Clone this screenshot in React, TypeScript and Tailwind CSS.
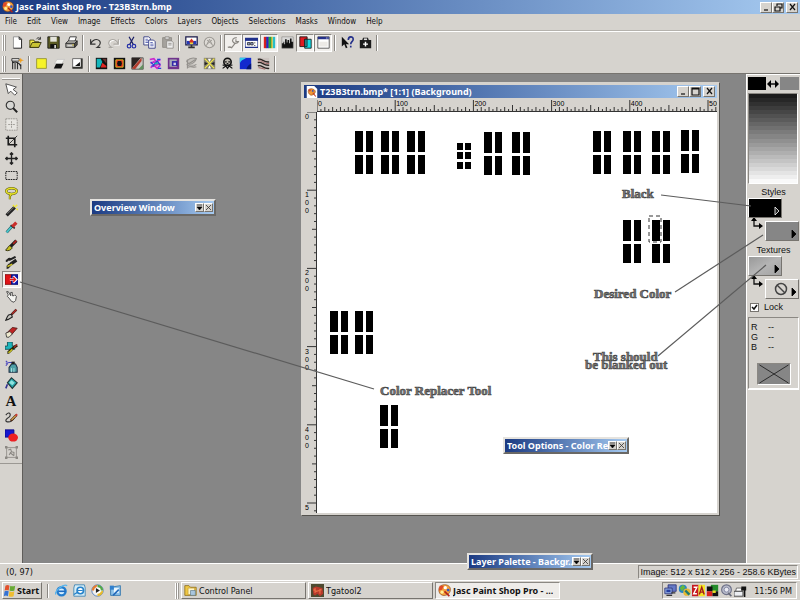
import React from "react";

const raised = "border border-t-white border-l-white border-r-[#77746f] border-b-[#77746f]";
const sunken = "border border-t-[#8b8883] border-l-[#8b8883] border-r-white border-b-white";
const boldFont = "font-['Noto_Sans',sans-serif] font-bold";

const icons: Record<string, React.ReactNode> = {
  app: (
    <>
      <path d="M1 7C1 3 5 0 10 1c5 1 6 5 5 8s-5 6-9 5-5-4-5-7z" fill="#f5a13c" stroke="#7a3a12" strokeWidth=".7" />
      <path d="M2 2l5 0-2 5-4 1z" fill="#e04a28" />
      <circle cx="9" cy="4.500" r="2" fill="#fff" />
      <circle cx="12.500" cy="7.500" r="1.700" fill="#3156c8" />
      <circle cx="5" cy="10" r="1.900" fill="#fff29a" />
      <path d="M8 9l6 6" stroke="#b22518" strokeWidth="2" />
    </>
  ),
  document: (
    <>
      <path d="M1 0h10l4 4v12H1z" fill="#fff" />
      <path d="M3 7c0-3 3-4 6-3s4 3 3 5-4 4-6 3-3-3-3-5z" fill="#f09a35" stroke="#8b3d15" strokeWidth=".8" />
      <path d="M3 4l4 1-2 3z" fill="#d3412a" />
      <path d="M9 9l4 5" stroke="#c93620" strokeWidth="1.4" />
      <circle cx="9" cy="6.500" r="1.300" fill="#3e4fae" />
    </>
  ),
  new: (
    <>
      <path d="M3 1h7l3 3v11H3z" fill="#fff" />
      <path d="M3 15V1h7" fill="none" stroke="#888" />
      <path d="M3 15h10V4M10 1v3h3z" fill="none" stroke="#222" strokeWidth="1.2" />
    </>
  ),
  open: (
    <>
      <path d="M1 5h5l1 2h5v7H1z" fill="#f6ec4a" stroke="#3c3a08" />
      <path d="M1 14l3-6h11l-3 6z" fill="#c9c334" stroke="#22210a" />
      <path d="M9 4c2-3 4-2 5 0m0-3v3h-3" fill="none" stroke="#222" />
    </>
  ),
  save: (
    <>
      <path d="M1 1h14v14H1z" fill="#5b5b24" stroke="#111" />
      <path d="M4 1h8v6H4z" fill="#e4e4dc" />
      <path d="M4 10h8v5H4z" fill="#111" />
      <path d="M9 11h2v4H9z" fill="#ddd" />
    </>
  ),
  print: (
    <>
      <path d="M6 1h8l-2 6H4z" fill="#fff" stroke="#222" />
      <path d="M1 9l3-3h11l-3 3z" fill="#c9c7c2" stroke="#222" />
      <path d="M1 9h11v5H1z" fill="#a5a39e" stroke="#222" />
      <path d="M12 9l3-3v5l-3 3z" fill="#55534f" stroke="#222" />
      <path d="M3 12h6" stroke="#f1f1f1" />
      <path d="M9 11h2" stroke="#cbb500" />
    </>
  ),
  undo: <path d="M2 4v6h6M2 10c2-6 8-7 11-4 2 3 0 6-3 8h4" fill="none" stroke="#333" strokeWidth="1.4" />,
  redo: (
    <>
      <path d="M15 5v6H9M15 11C13 5 7 4 4 7c-2 3 0 6 3 8" fill="none" stroke="#fff" strokeWidth="1.4" />
      <path d="M14 4v6H8M14 10C12 4 6 3 3 6c-2 3 0 6 3 8H2" fill="none" stroke="#aaa7a2" strokeWidth="1.4" />
    </>
  ),
  cut: (
    <>
      <path d="M5 1l5 9M11 1L6 10" stroke="#1b1f66" strokeWidth="1.5" />
      <circle cx="5" cy="12.500" r="2.200" fill="none" stroke="#2530a8" strokeWidth="1.5" />
      <circle cx="11" cy="12.500" r="2.200" fill="none" stroke="#2530a8" strokeWidth="1.5" />
    </>
  ),
  copy: (
    <>
      <path d="M1 1h6l2 2v8H1z" fill="#fff" stroke="#222a78" />
      <path d="M7 5h6l2 2v8H7z" fill="#fff" stroke="#222a78" />
      <path d="M3 4h3M3 6h4M3 8h4M9 8h3M9 10h4M9 12h4" stroke="#4450a8" />
    </>
  ),
  paste: (
    <>
      <path d="M2 2h11v12H2z" fill="#a5a29d" stroke="#8b8883" />
      <path d="M5 1h5v3H5z" fill="#ddd" stroke="#8b8883" />
      <path d="M7 6h6l2 2v7H7z" fill="#eee" stroke="#8b8883" />
      <path d="M9 9h4M9 11h4" stroke="#8b8883" />
    </>
  ),
  monitor: (
    <>
      <path d="M1 1h14v10H1z" fill="#fff" stroke="#181848" strokeWidth="1.5" />
      <path d="M2 6h12v4H2z" fill="#2438b4" />
      <path d="M8 3l3 4-2 2H7L5 7z" fill="#d83022" />
      <path d="M6 8h4v2H6z" fill="#e9d73a" />
      <path d="M7 11h2v2h3v2H4v-2h3z" fill="#333" />
    </>
  ),
  cancelCircle: (
    <>
      <circle cx="8" cy="8" r="6.500" fill="#dedbd6" stroke="#9b9893" strokeWidth="1.3" />
      <path d="M4 12l4-8 4 8M5 5l6 5M11 5l-6 5" fill="none" stroke="#9b9893" strokeWidth="1.2" />
    </>
  ),
  wrench: <path d="M3 14h3l4-5M8 8c-3-3 0-6 4-6M8 8c2 2 5 1 6-1h-3V4M1 14c2-1 4-1 5 1" fill="none" stroke="#8b8883" strokeWidth="1.4" />,
  options: (
    <>
      <path d="M0 3h16v11H0z" fill="#fff" stroke="#20318c" strokeWidth="1.5" />
      <path d="M0 3h16v3H0z" fill="#20318c" />
      <path d="M3 8h3v3H3zM7 8h3v3H7z" fill="#8d9ac8" stroke="#222" strokeWidth=".9" />
      <path d="M12 8v1M12 11v1" stroke="#222" strokeWidth="1.5" />
    </>
  ),
  palette: (
    <>
      <path d="M1 1h3v14H1z" fill="#df2020" />
      <path d="M4 1h3v14H4z" fill="#2525cc" />
      <path d="M7 1h3v14H7z" fill="#20b84a" />
      <path d="M10 1h2v14h-2z" fill="#ead725" />
      <path d="M12 1h3v14h-3z" fill="#27bccb" />
      <path d="M4 1v14M7 1v14M10 1v14" stroke="#222" strokeWidth=".5" />
    </>
  ),
  histogram: (
    <>
      <path d="M1 1h14v14H1z" fill="#d9d9d7" />
      <path d="M1 15V9h2V7h1v3h1V4h2v4h1V5h2v4h1V3h2v4h2v8z" fill="#111" />
      <path d="M1 1v14h14V1z" stroke="#77746f" fill="none" strokeWidth=".6" />
    </>
  ),
  layers: (
    <>
      <path d="M1 1h9v12H1z" fill="#e01c22" stroke="#111" />
      <path d="M7 4h8v11H7z" fill="#15dbe4" stroke="#111" />
      <path d="M7 4h3v9H7z" fill="#2b8d95" stroke="#111" strokeWidth=".8" />
    </>
  ),
  windowPanel: (
    <>
      <path d="M1 1h14v14H1z" fill="#fff" stroke="#444" />
      <path d="M1 1h14v3H1z" fill="#24308a" />
      <path d="M11 2.500h1M13 2.500h1" stroke="#fff" />
      <path d="M3 7h10v6H3z" fill="#eceae6" />
    </>
  ),
  help: (
    <>
      <path d="M1 1v12l3-3 2 5 2-1-2-4h4z" fill="#111" />
      <path d="M9 5c0-5 6-5 6-1 0 3-3 3-3 6M12 12v2" fill="none" stroke="#24308a" strokeWidth="2" />
    </>
  ),
  camera: (
    <>
      <path d="M1 5h3l1-3h6l1 3h3v10H1z" fill="#1b1b1b" />
      <path d="M6 3h4v2H6z" fill="#ddd" />
      <path d="M8 7v6M5 10h6" stroke="#fff" strokeWidth="1.8" />
    </>
  ),
  effectBrowser: (
    <>
      <path d="M1 2h9v3H1z" fill="#eee" stroke="#222" />
      <path d="M2 5v10M5 7v8M8 7v8M12 9v6" stroke="#333" strokeWidth="1.4" />
      <path d="M2 7c4-2 8 0 10 4" fill="none" stroke="#222" strokeWidth="1.4" />
      <path d="M12 1l1 2 3 1-3 1-1 3-1-3-2-1 2-1z" fill="#f0a020" />
    </>
  ),
  yellow: <path d="M2 2h12v12H2z" fill="#f6f32a" stroke="#8e8c2e" />,
  shadow: (
    <>
      <path d="M4 8h9l-3 6H1z" fill="#111" />
      <path d="M5 3h9l-3 5H2z" fill="#f4f4f1" stroke="#aaa" strokeWidth=".5" />
    </>
  ),
  cornerBox: (
    <>
      <path d="M2 2h12v12H2z" fill="#fff" stroke="#555" />
      <path d="M5 11l6-5v5z" fill="#111" />
      <path d="M12 2h2v12H2v-2h10z" fill="#33332f" />
    </>
  ),
  chrome: (
    <>
      <path d="M1 1h14v14H1z" fill="#111" />
      <path d="M2 2h5l2 4-3 7H2z" fill="#14b6bb" />
      <path d="M7 13l2-6 5 4v2z" fill="#e12623" />
      <path d="M9 2h5v6z" fill="#66322f" />
    </>
  ),
  frame: (
    <>
      <path d="M1 1h14v14H1z" fill="#111" />
      <path d="M3.500 3.500h9v9h-9z" fill="#e4281c" stroke="#e9d62a" />
      <path d="M6 5h4l1 3-1 3H6L5 8z" fill="#111" />
    </>
  ),
  slope: (
    <>
      <path d="M1 1h14v14H1z" fill="#c8c6c1" stroke="#444" />
      <path d="M1 1h11L1 14z" fill="#2b2322" />
      <path d="M1 14L13 1v4L5 15z" fill="#b23b2d" />
      <path d="M9 15l6-6v6z" fill="#61905d" />
    </>
  ),
  kaleido: (
    <>
      <path d="M1 1h14v14H1z" fill="#d8c4e4" />
      <path d="M1 3l5-1 3 4 5-3M2 8l4-2 3 4 5-2M2 13l4-3 4 4 4-4" fill="none" stroke="#cb27c8" strokeWidth="2" />
      <path d="M2 6l4 4 4-5 4 5M3 11h3M10 3h4M11 14h4" stroke="#2846d5" strokeWidth="1.6" fill="none" />
      <path d="M7 8h4" stroke="#1ac4ab" strokeWidth="2" />
    </>
  ),
  pattern: (
    <>
      <path d="M1 1h14v14H1z" fill="#70348c" />
      <path d="M3 3h9v9H3z" fill="#a7a9b7" />
      <path d="M6 5h7v6H6z" fill="#3328a8" />
      <path d="M8 7h3v3H8z" fill="#d5d1e6" />
    </>
  ),
  leaf: (
    <>
      <path d="M2 5c4-4 9-4 12-3-1 4-5 7-9 7zM2 9c3 3 8 3 12 0" fill="#c4c1bc" stroke="#94918d" strokeWidth="1.3" />
      <path d="M3 3v11M3 13c4-3 7 1 11-1M5 8l8-5" fill="none" stroke="#94918d" strokeWidth="1.4" />
    </>
  ),
  cross: (
    <>
      <path d="M1 1h14v14H1z" fill="#827e70" />
      <path d="M2 2l12 12M14 2L2 14" stroke="#efe64a" strokeWidth="1.7" />
      <path d="M6 2h4L8 6zM6 14h4l-2-4z" fill="#fff" />
      <path d="M2 6l4 2-4 2zM14 6l-4 2 4 2z" fill="#222" />
    </>
  ),
  portrait: (
    <>
      <circle cx="8" cy="6" r="4.500" fill="#bbb6ac" stroke="#111" strokeWidth="2" />
      <path d="M5 6h2M9 6h2M7 8h2M2 10h12M2 14l4-3 2 3 2-3 4 3" fill="none" stroke="#111" strokeWidth="1.5" />
    </>
  ),
  blue: (
    <>
      <path d="M1 1h14v14H1z" fill="#1229ce" />
      <path d="M1 1h8c-2 2-6 2-8 7z" fill="#31cceb" />
      <path d="M15 8v7H9c1-4 3-5 6-7z" fill="#071672" />
    </>
  ),
  stripes: (
    <>
      <path d="M1 1h14v14H1z" fill="#cbc4c0" />
      <path d="M1 3c5-2 7 4 14 3M1 7c5-2 7 4 14 3M1 11c5-2 7 4 14 3" stroke="#2b2422" strokeWidth="1.7" fill="none" />
      <path d="M1 5c5-2 7 4 14 3M2 13l8 2" stroke="#a35a59" fill="none" />
    </>
  ),
  arrow: <path d="M1 1l3 12 3-3 5 5 3-3-5-4 4-3z" fill="#fff" stroke="#333" />,
  zoom: (
    <>
      <circle cx="6.500" cy="6.500" r="5" fill="#d7d7d4" stroke="#333" strokeWidth="1.4" />
      <path d="M10 10l5 5" stroke="#222" strokeWidth="2.500" />
    </>
  ),
  deform: (
    <>
      <path d="M1 1h14v14H1z" fill="#e7e5e1" stroke="#8b8883" strokeDasharray="2 1" />
      <path d="M8 4v8M4 8h8" stroke="#8b8883" strokeDasharray="2 1" />
    </>
  ),
  crop: (
    <>
      <path d="M4 1v11h11M1 4h11v11" stroke="#1c1c1c" strokeWidth="2" fill="none" />
      <path d="M5 11L15 1" stroke="#1c1c1c" />
    </>
  ),
  move: <path d="M8 1v14M1 8h14M6 3l2-2 2 2M6 13l2 2 2-2M3 6L1 8l2 2M13 6l2 2-2 2" fill="none" stroke="#222" strokeWidth="1.7" />,
  select: <path d="M1 3h14v10H1z" fill="none" stroke="#222" strokeWidth="1.3" strokeDasharray="2 1" />,
  lasso: (
    <>
      <ellipse cx="8" cy="5" rx="6.500" ry="3.500" fill="none" stroke="#5c590f" strokeWidth="3" />
      <path d="M5 8c3 0 3 2 1 3v4" fill="none" stroke="#5c590f" strokeWidth="2.600" />
      <ellipse cx="8" cy="5" rx="6.500" ry="3.500" fill="none" stroke="#e8e327" strokeWidth="1.8" />
      <path d="M5 8c3 0 3 2 1 3v4" fill="none" stroke="#e8e327" strokeWidth="1.3" />
    </>
  ),
  wand: (
    <>
      <path d="M2 14L12 4" stroke="#222" strokeWidth="4" />
      <path d="M3 12l8-8" stroke="#858585" />
      <path d="M12 4l3-3M10 1l1 2M14 6l2 1" stroke="#f1e838" strokeWidth="2" />
    </>
  ),
  dropper: (
    <>
      <path d="M2 14l7-8" stroke="#235b61" strokeWidth="3.500" />
      <path d="M2 14l7-8" stroke="#49c8cd" strokeWidth="2" />
      <path d="M7 5l5 4" stroke="#222" strokeWidth="2" />
      <path d="M9 7l5-5" stroke="#c92f2b" strokeWidth="4" />
    </>
  ),
  brush: (
    <>
      <path d="M1 13c2 0 2-4 5-5l3 3c-2 3-5 4-8 3z" fill="#c4bf22" stroke="#24230b" />
      <path d="M7 9l7-7" stroke="#1d1d1d" strokeWidth="4" />
      <path d="M10 6l4-4" stroke="#b42220" strokeWidth="2" />
    </>
  ),
  cloneBrush: (
    <>
      <path d="M1 6c3 0 3-4 6-2M5 5l8-4" fill="none" stroke="#222" strokeWidth="2.500" />
      <path d="M2 14c3 0 3-5 6-3M7 10l7-5" fill="none" stroke="#222" strokeWidth="4" />
      <path d="M3 13l6-3" stroke="#ccc22a" strokeWidth="2" />
    </>
  ),
  replacer: (
    <>
      <path d="M0 2h8v12H0z" fill="#e01518" stroke="#7d090c" />
      <path d="M8 2h8v12H8z" fill="#121ab1" stroke="#080d67" />
      <path d="M6 8h8M10 4l4 4-4 4" fill="none" stroke="#fff" strokeWidth="3" />
      <path d="M6 8h7M10 5l3 3-3 3" fill="none" stroke="#e01518" strokeWidth="1.6" />
    </>
  ),
  hand: <path d="M2 2l2 0 3 5V3h2v4h2l1-1 2 2-1 5-2 2-3-1-3-4-2-2 1-2z" fill="#f4f4f0" stroke="#333" />,
  smudge: (
    <>
      <path d="M1 15c3-8 4-7 7-7l1 3-5 3z" fill="#c9c7c1" stroke="#222" strokeWidth="1.4" />
      <path d="M8 8l6-6" stroke="#4b2522" strokeWidth="3" />
      <path d="M9 7l5-5" stroke="#bf2c26" strokeWidth="1.5" />
    </>
  ),
  eraser: (
    <>
      <path d="M2 10l7-7 6 1-7 8z" fill="#bd2524" stroke="#4b1713" />
      <path d="M1 10l5-2 3 3-4 4H2z" fill="#eee9ce" stroke="#333" />
    </>
  ),
  clone: (
    <>
      <path d="M3 0h6v5h3v4H0V5h3z" fill="#1eb6bd" stroke="#10474c" />
      <path d="M3 13c3 0 4-5 12-9" fill="none" stroke="#252409" strokeWidth="3.500" />
      <path d="M4 13c2 0 3-2 5-4" fill="none" stroke="#c6bf22" strokeWidth="1.8" />
      <path d="M11 7l4-4" stroke="#b72929" strokeWidth="1.5" />
    </>
  ),
  spray: (
    <>
      <path d="M1 1l2 2M1 4h3M1 7l2-2M4 3h6" stroke="#4542bd" strokeWidth="1.3" />
      <path d="M8 5h5l2 4v6H5V9z" fill="#4d9ea5" stroke="#1c2d42" strokeWidth="1.3" />
      <path d="M8 2h4v3H8z" fill="#222" />
      <path d="M8 10v5M11 10v5" stroke="#b9e9e8" />
    </>
  ),
  fill: (
    <>
      <path d="M8 1l7 6-6 7-6-7z" fill="#26a5a9" stroke="#1e3639" strokeWidth="1.4" />
      <path d="M8 4l4 3-3 3-4-3z" fill="#8ee3df" />
      <path d="M3 9l-2 5" fill="none" stroke="#333391" strokeWidth="2" />
    </>
  ),
  draw: (
    <>
      <path d="M1 5c5-6 8 0 2 4s3 8 9-1" fill="none" stroke="#333" strokeWidth="1.4" />
      <path d="M7 12l7-7" stroke="#4f260e" strokeWidth="3" />
      <path d="M8 11l6-6" stroke="#dfb356" strokeWidth="1.4" />
      <path d="M13 6l2-2" stroke="#ca3b34" strokeWidth="2.500" />
    </>
  ),
  shapes: (
    <>
      <path d="M0 1h11v9H0z" fill="#1616cf" stroke="#090980" />
      <ellipse cx="10" cy="10.500" rx="6" ry="5" fill="#ec2023" />
    </>
  ),
  object: (
    <>
      <path d="M2 2h12v12H2z" fill="none" stroke="#8b8883" />
      <path d="M0 0h3v3H0zM13 0h3v3h-3zM0 13h3v3H0zM13 13h3v3h-3z" fill="#8b8883" />
      <path d="M4 5l3-1 1 3 3 1v4M5 11l3-4M6 8l5 4" fill="none" stroke="#8b8883" strokeWidth="1.3" />
    </>
  ),
  windows: (
    <>
      <path d="M3 2c2-1 3-1 5 0L7 8C5 7 4 7 2 8z" fill="#e3512c" />
      <path d="M9 2c2 1 4 1 6 0l-1 6c-2 1-4 1-6 0z" fill="#69aa35" />
      <path d="M2 9c2-1 3-1 5 0l-1 6c-2-1-3-1-5 0z" fill="#3573d3" />
      <path d="M8 9c2 1 4 1 6 0l-1 6c-2 1-4 1-6 0z" fill="#efbd31" />
    </>
  ),
  ie: (
    <>
      <circle cx="8" cy="9" r="5" fill="#d7efff" stroke="#247dce" strokeWidth="3" />
      <path d="M4 9h9" stroke="#1c6ac0" strokeWidth="2" />
      <path d="M1 13C-1 9 10-1 15 2" stroke="#58b5ed" strokeWidth="1.6" fill="none" />
    </>
  ),
  outlook: (
    <>
      <path d="M2 1h12l1 4v10H1V5z" fill="#d5ecf6" stroke="#347eaf" />
      <circle cx="9" cy="8" r="4" fill="#fff" stroke="#2683cb" strokeWidth="2" />
      <path d="M6 8h6M1 13l5-3" stroke="#2683cb" strokeWidth="1.5" />
    </>
  ),
  media: (
    <>
      <circle cx="8" cy="8" r="7" fill="#eee" stroke="#4472b7" />
      <path d="M8 1a7 7 0 0 1 7 7h-4L8 5z" fill="#54a945" />
      <path d="M15 8a7 7 0 0 1-7 7v-4z" fill="#e9ba28" />
      <path d="M8 1a7 7 0 0 0-7 7h4z" fill="#e77c2e" />
      <circle cx="8" cy="8" r="4" fill="#fff" />
      <path d="M6 5l5 3-5 3z" fill="#222" />
    </>
  ),
  desktop: (
    <>
      <path d="M2 4l12-2v12H2z" fill="#8fc3ea" stroke="#276fa9" />
      <path d="M6 5h6v6H6z" fill="#ecf8ff" />
      <path d="M1 2h5v5H1z" fill="#2f7fce" />
      <path d="M5 14l7-7" stroke="#246aba" strokeWidth="2" />
    </>
  ),
  folder: (
    <>
      <path d="M1 2h5l2 2h7v10H1z" fill="#efc743" stroke="#8c6e1c" />
      <path d="M5 5h8v8H5z" fill="#fff6c4" stroke="#b98f2c" strokeWidth=".7" />
      <path d="M8 8h6v6H8z" fill="#a9c6de" stroke="#5d7893" strokeWidth=".8" />
    </>
  ),
  tga: (
    <>
      <path d="M0 0h16v16H0z" fill="#4d4a30" />
      <path d="M2 5l4-2 8 2 1 7-4 3-3-3-3 2-2-1z" fill="#b8392b" />
      <path d="M3 7l4 2 6-2M5 5v6M11 6v6" stroke="#e56c45" strokeWidth="1.5" fill="none" />
    </>
  ),
  network: (
    <>
      <path d="M5 1h10v8H5z" fill="#667ac5" stroke="#272f76" />
      <path d="M1 5h9v7H1z" fill="#8ba5dd" stroke="#272f76" />
      <path d="M3 7h5v3H3z" fill="#263e9f" />
      <path d="M3 14h7M9 11h5" stroke="#333" strokeWidth="1.5" />
    </>
  ),
  globe: (
    <>
      <circle cx="6" cy="6" r="5" fill="#2684c7" />
      <path d="M2 5l4-4 3 3-4 5z" fill="#65b83c" />
      <circle cx="11" cy="10" r="4.500" fill="#e7b930" />
      <path d="M9 8l5 5" stroke="#1e7870" strokeWidth="3" />
    </>
  ),
  za: (
    <>
      <path d="M0 1h8v14H0z" fill="#c61920" />
      <path d="M8 1h8v14H8z" fill="#f4e524" />
      <path d="M2 4h4l-4 8h4" stroke="#fff" strokeWidth="1.7" fill="none" />
      <path d="M9 13l3-9 3 9M10 10h4" stroke="#a51c1b" strokeWidth="1.7" fill="none" />
    </>
  ),
  quad: (
    <>
      <path d="M6 1h9v8H6z" fill="#258c2c" />
      <path d="M1 3h7v6H1z" fill="#111" />
      <path d="M1 9h7v6H1z" fill="#da2421" />
      <path d="M8 9h7v6H8z" fill="#111" />
      <path d="M8 8h4v3H8z" fill="#ece126" />
    </>
  ),
  speaker: (
    <>
      <circle cx="8" cy="7" r="6" fill="#b9bccb" stroke="#6e7188" strokeWidth="1.4" />
      <circle cx="8" cy="7" r="3" fill="#e9eaf2" stroke="#777b99" />
      <path d="M10 11l4 4" stroke="#676978" strokeWidth="2" />
    </>
  ),
  printerTray: (
    <>
      <path d="M3 5h6l1 4H2z" fill="#fff" stroke="#555" />
      <path d="M0 9h11v6H0z" fill="#eceef2" stroke="#333" />
      <path d="M9 3h6v5h-1v8h-2V8H9z" fill="#111" />
    </>
  ),
};

const sizes = {
  sm: "h-[12px] w-[12px]",
  md: "h-[13px] w-[13px]",
};

function Icon({ name, size = "md" }: { name: string; size?: "sm" | "md" }) {
  return (
    <svg viewBox="0 0 16 16" className={`${sizes[size]} shrink-0`} aria-hidden="true">
      {icons[name]}
    </svg>
  );
}

function ToolButton({ name, active = false }: { name: string; active?: boolean }) {
  return (
    <button
      aria-label={name}
      className={`flex h-[18px] w-[18px] shrink-0 items-center justify-center ${active ? `${sunken} bg-[#f1efec]` : ""}`}
    >
      <Icon name={name} />
    </button>
  );
}

function Divider() {
  return <span className="mx-[2px] h-4 w-[2px] shrink-0 border-l border-r border-l-[#8b8883] border-r-white" />;
}

function Grip() {
  return (
    <span className="mx-[2px] flex h-4 w-[4px] shrink-0">
      <span className="w-[2px] border-l border-r border-l-white border-r-[#9b9893]" />
      <span className="w-[2px] border-l border-r border-l-white border-r-[#9b9893]" />
    </span>
  );
}

function ToolGroups({ groups, active = [] }: { groups: string[][]; active?: string[] }) {
  return (
    <div role="toolbar" className="flex h-[21px] items-center">
      <Grip />
      {groups.map((group, i) => (
        <React.Fragment key={i}>
          {i > 0 && <Divider />}
          {group.map((name) => (
            <ToolButton key={name} name={name} active={active.includes(name)} />
          ))}
        </React.Fragment>
      ))}
      <Divider />
    </div>
  );
}

function WindowButton({ kind }: { kind: "minimize" | "restore" | "maximize" | "close" }) {
  const paths = {
    minimize: "M2 7h4",
    restore: "M3 3V1h5v4H6M1 4h5v4H1z",
    maximize: "M1 1h7v7H1zM1 2h7",
    close: "M2 1l5 6M7 1L2 7",
  };
  return (
    <button aria-label={kind} className={`flex h-[11px] w-[12px] items-center justify-center bg-[#d6d3ce] ${raised}`}>
      <svg viewBox="0 0 9 9" className="h-[9px] w-[9px]">
        <path d={paths[kind]} fill="none" stroke="#111" strokeWidth="1.2" />
      </svg>
    </button>
  );
}

function WindowButtons({ middle }: { middle: "restore" | "maximize" }) {
  return (
    <div className="ml-auto flex items-center">
      <WindowButton kind="minimize" />
      <WindowButton kind={middle} />
      <span className="w-[2px]" />
      <WindowButton kind="close" />
    </div>
  );
}

const menus = ["File", "Edit", "View", "Image", "Effects", "Colors", "Layers", "Objects", "Selections", "Masks", "Window", "Help"];

const tools = [
  "arrow", "zoom", "deform", "crop", "move", "select", "lasso", "wand", "dropper", "brush", "cloneBrush",
  "replacer", "hand", "smudge", "eraser", "clone", "spray", "fill", "text", "draw", "shapes", "object",
];

function ToolPalette() {
  return (
    <aside className="flex w-[23px] shrink-0 flex-col items-center border-r border-[#5f5d5a]">
      <span className="mt-1 h-[2px] w-[18px] border-b border-t border-b-[#9b9893] border-t-white" />
      <div className="mt-px flex h-[380px] flex-col justify-between">
        {tools.map((name) => (
          <button
            key={name}
            aria-label={name}
            className={`flex h-[17px] w-[19px] items-center justify-center ${name === "replacer" ? `${sunken} bg-[#f1efec]` : ""}`}
          >
            {name === "text" ? (
              <span className="font-['Liberation_Serif',serif] text-[15px] font-bold leading-4">A</span>
            ) : (
              <Icon name={name} />
            )}
          </button>
        ))}
      </div>
      <span className="mt-[2px] h-px w-full bg-[#9b9893]" />
    </aside>
  );
}

const UNIT = 0.782;
const ticks = Array.from({ length: 103 }, (_, i) => i * 5);
const hundreds = [0, 100, 200, 300, 400, 500];

function tickLength(value: number) {
  if (value % 100 === 0) return 12;
  if (value % 50 === 0) return 7;
  return value % 10 === 0 ? 5 : 3;
}

function HorizontalRuler() {
  return (
    <svg className="h-[14px] w-full border-b border-[#333]" aria-label="Horizontal ruler">
      {ticks.map((t) => (
        <path key={t} d={`M${t * UNIT} 14v-${tickLength(t)}`} stroke="#333" strokeWidth="1" />
      ))}
      {hundreds.map((t) => (
        <text key={t} x={t * UNIT + 1} y="8" fontSize="7" fontFamily="Liberation Sans, sans-serif">
          {t}
        </text>
      ))}
    </svg>
  );
}

function VerticalRuler() {
  return (
    <svg className="h-full w-full border-r border-[#333]" aria-label="Vertical ruler">
      {ticks.map((t) => (
        <path key={t} d={`M13 ${t * UNIT}h-${tickLength(t) - 2}`} stroke="#333" strokeWidth="1" />
      ))}
      {hundreds.map((t) =>
        String(t)
          .slice(0, t === 500 ? 1 : 3)
          .split("")
          .map((digit, i) => (
            <text key={`${t}-${i}`} x="1" y={t * UNIT + 7 + i * 8} fontSize="7" fontFamily="Liberation Sans, sans-serif">
              {digit}
            </text>
          )),
      )}
    </svg>
  );
}

const panes = [
  [38, 19], [64, 19], [90, 19], [167, 20], [195, 20], [276, 19], [306, 19],
  [335, 19], [364, 18], [306, 108], [335, 108], [13, 199], [38, 199], [63, 293],
];

const notes = [
  { x: 305, y: 86, text: "Black" },
  { x: 277, y: 186, text: "Desired Color" },
  { x: 276, y: 249, text: "This should" },
  { x: 268, y: 257, text: "be blanked out" },
  { x: 63, y: 283, text: "Color Replacer Tool" },
];

function Artwork() {
  return (
    <svg className="block h-full w-full bg-white">
      {panes.map(([x, y]) => (
        <path key={`${x}-${y}`} d={`M${x} ${y}h8v21h-8zM${x + 11} ${y}h7v21h-7zM${x} ${y + 24}h8v19h-8zM${x + 11} ${y + 24}h7v19h-7z`} />
      ))}
      {[31, 40, 50].map((y) => (
        <path key={y} d={`M140 ${y}h6v7h-6zM148 ${y}h6v7h-6z`} />
      ))}
      <rect x="332" y="104" width="12" height="26" fill="none" stroke="#333" strokeDasharray="4 3" />
      {notes.map((n) => (
        <text
          key={n.text}
          x={n.x}
          y={n.y}
          fontSize="13"
          fontWeight="700"
          fontFamily="Liberation Serif, serif"
          fill="#777"
          stroke="#444"
          strokeWidth="0.6"
        >
          {n.text}
        </text>
      ))}
    </svg>
  );
}

function DocumentWindow() {
  return (
    <section className="absolute left-[278px] top-[8px] flex h-[434px] w-[419px] flex-col border border-b-[#55534f] border-l-[#d6d3ce] border-r-[#55534f] border-t-[#d6d3ce] bg-[#d6d3ce] p-[2px]">
      <header className="flex h-[13px] shrink-0 items-center bg-gradient-to-r from-[#1c3a82] to-[#a6caf0] pl-[2px] pr-[2px] text-white">
        <Icon name="document" size="sm" />
        <h2 className={`ml-[2px] text-[9px] leading-3 ${boldFont}`}>T23B3trn.bmp* [1:1] (Background)</h2>
        <WindowButtons middle="maximize" />
      </header>
      <div className="grid min-h-0 flex-1 grid-cols-[13px_1fr] grid-rows-[14px_1fr]">
        <span />
        <HorizontalRuler />
        <VerticalRuler />
        <Artwork />
      </div>
    </section>
  );
}

function FloatingPalette({ title, place }: { title: string; place: string }) {
  return (
    <section className={`absolute ${place} h-[17px] w-[126px] border-2 border-b-[#6a6865] border-l-[#e5e3df] border-r-[#6a6865] border-t-[#e5e3df] bg-[#d6d3ce]`}>
      <header className="flex h-[13px] items-center bg-gradient-to-r from-[#1c3a82] to-[#a6caf0] pl-[2px] pr-px text-white">
        <h2 className={`min-w-0 flex-1 overflow-hidden whitespace-nowrap text-[9px] leading-3 ${boldFont}`}>{title}</h2>
        <button aria-label={`Roll down ${title}`} className={`flex h-[9px] w-[9px] items-center justify-center bg-[#d6d3ce] ${raised}`}>
          <svg viewBox="0 0 7 7" className="h-[7px] w-[7px]"><path d="M1 1h5M1 3h5L3.500 6z" stroke="#111" strokeWidth=".7" /></svg>
        </button>
        <button aria-label={`Close ${title}`} className={`flex h-[9px] w-[9px] items-center justify-center bg-[#d6d3ce] ${raised}`}>
          <svg viewBox="0 0 7 7" className="h-[7px] w-[7px]"><path d="M1 1l5 5M6 1L1 6" stroke="#333" strokeWidth=".8" /></svg>
        </button>
      </header>
    </section>
  );
}

function SwapArrow() {
  return (
    <svg viewBox="0 0 14 14" className="h-[14px] w-[14px] shrink-0">
      <path d="M5 3v6h6" fill="none" stroke="#111" strokeWidth="1.3" />
      <path d="M2 4l3-4 3 4zM10 6l4 3-4 3z" />
    </svg>
  );
}

function Swatch({ label, fill, children, arrow = "#000" }: { label: string; fill: string; children?: React.ReactNode; arrow?: string }) {
  return (
    <button aria-label={label} className={`relative flex h-[20px] w-[34px] items-center justify-center ${fill} ${raised}`}>
      {children}
      <svg viewBox="0 0 6 10" className="absolute bottom-px right-px h-[10px] w-[6px]">
        <path d="M1 1l4 4-4 4z" fill={arrow} stroke={arrow === "#000" ? "#000" : "#fff"} strokeWidth=".8" />
      </svg>
    </button>
  );
}

const grays = Array.from({ length: 22 }, (_, i) => Math.round(28 + i * 10.5));

function ColorPanel() {
  return (
    <aside className="flex w-[54px] shrink-0 flex-col border-l border-t border-white px-px pt-[2px] font-['Liberation_Sans',sans-serif] text-[9px] leading-3">
      <div className="flex h-[13px] items-center">
        <span className="h-full w-[18px] bg-black" />
        <svg viewBox="0 0 14 10" className="h-[10px] w-[14px]">
          <path d="M3 5h8" stroke="#111" strokeWidth="1.5" />
          <path d="M5 1v8L1 5zM9 1v8l4-4z" />
        </svg>
        <span className="h-full flex-1 bg-[#868686]" />
      </div>
      <div className={`mt-[3px] flex h-[91px] w-[50px] flex-col ${sunken}`}>
        {grays.map((g) => (
          <span key={g} className="flex-1" style={{ backgroundColor: `rgb(${g},${g},${g})` }} />
        ))}
      </div>
      <h3 className="mt-[2px] text-center">Styles</h3>
      <Swatch label="Foreground style" fill="bg-black" arrow="#222" />
      <div className="mt-[3px] flex justify-end">
        <span className="-mt-1 mr-[2px]"><SwapArrow /></span>
        <Swatch label="Background style" fill="bg-[#868686]" />
      </div>
      <h3 className="mt-[3px] text-center">Textures</h3>
      <Swatch label="Foreground texture" fill="bg-gradient-to-br from-[#999] via-[#b4b4b4] to-[#a2a2a2]" />
      <div className="mt-[3px] flex justify-end">
        <span className="-mt-1 mr-[2px]"><SwapArrow /></span>
        <Swatch label="Background texture" fill="bg-[#d6d3ce]">
          <svg viewBox="0 0 14 14" className="mr-[3px] h-[14px] w-[14px]">
            <circle cx="7" cy="7" r="5.500" fill="none" stroke="#444" strokeWidth="1.5" />
            <path d="M3 3l8 8" stroke="#444" strokeWidth="1.5" />
          </svg>
        </Swatch>
      </div>
      <label className="mt-[2px] flex h-3 items-center gap-[5px] pl-[2px]">
        <span className="relative flex h-[9px] w-[9px]">
          <input type="checkbox" defaultChecked className="peer h-[9px] w-[9px] appearance-none border border-[#77746f] bg-white" />
          <svg viewBox="0 0 9 9" className="pointer-events-none absolute inset-0 hidden h-[9px] w-[9px] peer-checked:block">
            <path d="M2 4l2 2 3-4" fill="none" stroke="#111" strokeWidth="1.5" />
          </svg>
        </span>
        Lock
      </label>
      <div className={`mt-1 flex h-[72px] flex-col justify-between px-[2px] pb-[3px] pt-1 ${sunken}`}>
        <dl className="grid grid-cols-[17px_1fr] leading-[10px]">
          <dt>R</dt><dd>--</dd>
          <dt>G</dt><dd>--</dd>
          <dt>B</dt><dd>--</dd>
        </dl>
        <svg viewBox="0 0 34 22" className={`h-[22px] w-[34px] self-center bg-[#868686] ${sunken}`}>
          <path d="M1 1l32 20M33 1L1 21" stroke="#222" />
        </svg>
      </div>
      <span className="h-px bg-white" />
    </aside>
  );
}

function TaskButton({ icon, label, active = false }: { icon: string; label: string; active?: boolean }) {
  return (
    <button
      className={`flex h-[17px] w-[125px] items-center gap-[2px] px-[2px] ${active ? `${sunken} ${boldFont} bg-[#eeece9]` : raised}`}
    >
      <Icon name={icon} />
      <span className="truncate">{label}</span>
    </button>
  );
}

function Taskbar() {
  return (
    <footer className="flex h-[20px] shrink-0 items-center border-t border-white pl-[2px] pr-[3px]">
      <button className={`flex h-[17px] w-[40px] items-center gap-px ${boldFont} ${raised}`}>
        <Icon name="windows" />
        Start
      </button>
      <span className="ml-[5px] h-[14px] w-[2px] border-l border-r border-l-[#8b8883] border-r-white" />
      <nav className="ml-[6px] flex w-[118px] gap-[5px]">
        {["ie", "outlook", "media", "desktop"].map((n) => (
          <button key={n} aria-label={n}><Icon name={n} /></button>
        ))}
      </nav>
      <Grip />
      <div className="flex gap-[2px]">
        <TaskButton icon="folder" label="Control Panel" />
        <TaskButton icon="tga" label="Tgatool2" />
        <TaskButton icon="app" label="Jasc Paint Shop Pro - ..." active />
      </div>
      <div className={`ml-auto flex h-[17px] items-center gap-px pl-px pr-1 ${sunken}`}>
        {["network", "globe", "za", "quad", "speaker", "printerTray"].map((n) => (
          <Icon key={n} name={n} />
        ))}
        <time className="ml-[6px]">11:56 PM</time>
      </div>
    </footer>
  );
}

function Callouts() {
  return (
    <svg className="pointer-events-none absolute inset-0 h-full w-full" stroke="#5c5c5c" strokeWidth="1.2" aria-hidden="true">
      <path d="M20 282L374 389" />
      <path d="M661 195L751 206" />
      <path d="M675 292L763 235" />
      <path d="M658 356L766 265" />
    </svg>
  );
}

export default function App() {
  return (
    <div className="relative flex h-screen flex-col overflow-hidden bg-[#d6d3ce] font-['DejaVu_Sans_Condensed','DejaVu_Sans',sans-serif] text-[9px] leading-3 text-[#111]">
      <header className="flex h-[14px] shrink-0 items-center bg-gradient-to-r from-[#1c3a82] to-[#a6caf0] pl-[2px] pr-[2px] text-white">
        <Icon name="app" size="sm" />
        <h1 className={`ml-[2px] ${boldFont}`}>Jasc Paint Shop Pro - T23B3trn.bmp</h1>
        <WindowButtons middle="restore" />
      </header>
      <nav className="flex h-[17px] shrink-0 items-center border-b border-[#b5b2ad] text-[8px]">
        {menus.map((m) => (
          <button key={m} className="px-[5px]">{m}</button>
        ))}
      </nav>
      <div className="h-[43px] shrink-0 border-b border-t border-b-[#77746f] border-t-white">
        <ToolGroups
          groups={[
            ["new", "open", "save", "print"],
            ["undo", "redo", "cut", "copy", "paste"],
            ["monitor", "cancelCircle"],
            ["wrench", "options", "palette", "histogram", "layers", "windowPanel"],
            ["help", "camera"],
          ]}
          active={["wrench", "options", "palette", "layers", "windowPanel"]}
        />
        <ToolGroups
          groups={[
            ["effectBrowser"],
            ["yellow", "shadow", "cornerBox"],
            ["chrome", "frame", "slope", "kaleido", "pattern", "leaf", "cross", "portrait", "blue", "stripes"],
          ]}
        />
      </div>
      <div className="flex min-h-0 flex-1">
        <ToolPalette />
        <main className="relative min-w-0 flex-1 overflow-hidden bg-[#868686]">
          <DocumentWindow />
        </main>
        <ColorPanel />
      </div>
      <div className="flex h-[17px] shrink-0 items-center border-t border-white pl-[6px] pr-[2px]">
        <span>(0, 97)</span>
        <span className={`ml-auto h-[14px] px-px font-['Liberation_Sans',sans-serif] ${sunken}`}>Image: 512 x 512 x 256 - 258.6 KBytes</span>
      </div>
      <Taskbar />
      <FloatingPalette title="Overview Window" place="left-[90px] top-[199px]" />
      <FloatingPalette title="Tool Options - Color Replacer" place="left-[503px] top-[437px]" />
      <FloatingPalette title="Layer Palette - Backgr..." place="left-[467px] top-[553px]" />
      <Callouts />
    </div>
  );
}
